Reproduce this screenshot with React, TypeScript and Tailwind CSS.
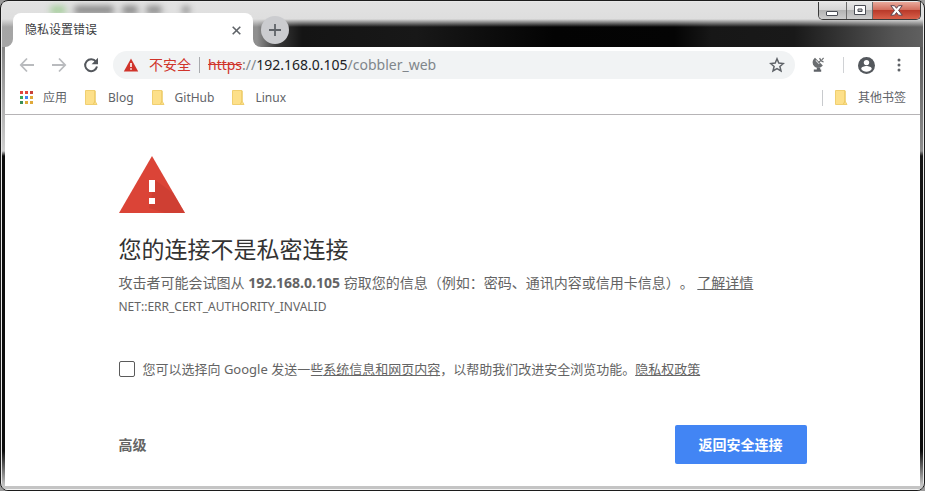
import React, { useState } from 'react';

const BOOKMARKS = ['Blog', 'GitHub', 'Linux'];

const APP_DOTS = [
  'bg-[#e0483e]', 'bg-[#e0483e]', 'bg-[#c9403a]',
  'bg-[#3aa757]', 'bg-[#4285f4]', 'bg-[#e0a93a]',
  'bg-[#3a8f57]', 'bg-[#e0a93a]', 'bg-[#e0a93a]',
];

const FolderIcon: React.FC = () => (
  <svg width="13" height="15" viewBox="0 0 13 15" aria-hidden="true">
    <path d="M0.5 0.5h9.5v10.5l2 3.5H0.5z" fill="#fde08a" stroke="#f0cf70" />
    <path d="M10 1v10l-1.5 3" fill="none" stroke="#eac75e" />
  </svg>
);

const WindowButtons: React.FC = () => (
  <div className="flex h-[18px] shrink-0 self-start overflow-hidden rounded-b-[5px] border border-t-0 border-[#3a3a3a]">
    <button
      aria-label="最小化"
      className="flex w-7 items-center justify-center border-r border-[#6b6b6b] bg-[linear-gradient(#e6e6e6,#d6d6d6_45%,#b4b4b4_50%,#cccccc)]"
    >
      <svg width="13" height="12" viewBox="0 0 13 12">
        <rect x="0.5" y="6.5" width="11" height="4" rx="0.5" fill="#fff" stroke="#4a4d55" />
      </svg>
    </button>
    <button
      aria-label="最大化"
      className="flex w-[26px] items-center justify-center border-r border-[#6b6b6b] bg-[linear-gradient(#e6e6e6,#d6d6d6_45%,#b4b4b4_50%,#cccccc)]"
    >
      <svg width="12" height="11" viewBox="0 0 12 11">
        <path d="M0.5 0.5h11v9h-11z M4 4v2.5h4V4z" fill="#fff" fillRule="evenodd" stroke="#4a4d55" />
      </svg>
    </button>
    <button
      aria-label="关闭"
      className="flex w-[47px] items-center justify-center bg-[linear-gradient(#e9a99b,#d3705f_45%,#b93a2a_50%,#d9604a)]"
    >
      <svg width="13" height="11" viewBox="0 0 13 11">
        <path
          d="M0.8 0.7h3.7l2 2.6 2-2.6h3.7L8.6 5.4l3.7 4.8H8.5L6.5 7.5l-2 2.7H0.8l3.7-4.8z"
          fill="#fff"
          stroke="#5a4550"
        />
      </svg>
    </button>
  </div>
);

const TitleBar: React.FC = () => (
  <div className="relative flex h-[45px] items-end bg-[linear-gradient(#e2e2e2,#dedede_17px,#dedede00_25px),linear-gradient(90deg,#a6a6a6,#8f8f8f_255px,#3a3a3a_275px,#141414_300px,#181818_45%,#030303_60%,#040404_73%,#171717_77%,#191919_86%,#555_97%,#606060)]">
    <div aria-hidden="true" className="absolute top-1 left-12 flex items-center gap-2 blur-[3px]">
      <span className="h-2 w-4 rounded bg-[#a5cf9b]" />
      <span className="h-2 w-10 rounded bg-[#858585]" />
      <span className="h-2 w-4 rounded bg-[#858585]" />
      <span className="h-2 w-4 rounded bg-[#8a8a8a]" />
      <span className="ml-3 h-2 w-2 rounded bg-[#8a8a8a]" />
    </div>

    <svg width="8" height="8" viewBox="0 0 8 8" className="relative ml-[3px]" aria-hidden="true">
      <path d="M8 0v8H0a8 8 0 0 0 8-8z" fill="#fff" />
    </svg>
    <div className="relative flex h-[34px] w-60 items-center justify-between rounded-t-lg bg-white pr-3 pl-3 text-[12px] text-[#3c4043]">
      <span>隐私设置错误</span>
      <button aria-label="关闭标签页">
        <svg width="9" height="9" viewBox="0 0 9 9">
          <path d="M0.7 0.7l7.6 7.6M8.3 0.7L0.7 8.3" stroke="#5f6368" strokeWidth="1.6" />
        </svg>
      </button>
    </div>
    <svg width="8" height="8" viewBox="0 0 8 8" className="relative" aria-hidden="true">
      <path d="M0 0v8h8a8 8 0 0 1-8-8z" fill="#fff" />
    </svg>
    <button
      aria-label="打开新的标签页"
      className="mb-[3px] flex h-7 w-7 items-center justify-center rounded-full bg-[#cbcccf]"
    >
      <svg width="12" height="12" viewBox="0 0 12 12">
        <path d="M6 0v12M0 6h12" stroke="#5f6368" strokeWidth="1.8" />
      </svg>
    </button>
    <div className="flex-1" />
    <WindowButtons />
    <div className="w-0.5" />
  </div>
);

const Toolbar: React.FC = () => (
  <div className="flex h-9 items-center pr-[13px] pl-3.5">
    <div className="flex gap-4">
      <button aria-label="后退">
        <svg width="16" height="16" viewBox="0 0 16 16" fill="none" stroke="#b9bbbe" strokeWidth="1.8">
          <path d="M15 8H2.5M8 1.5L1.8 8 8 14.5" />
        </svg>
      </button>
      <button aria-label="前进">
        <svg width="16" height="16" viewBox="0 0 16 16" fill="none" stroke="#b9bbbe" strokeWidth="1.8">
          <path d="M1 8h12.5M8 1.5L14.2 8 8 14.5" />
        </svg>
      </button>
      <button aria-label="重新加载">
        <svg width="16" height="16" viewBox="0 0 16 16">
          <path d="M13 4.6A6 6 0 1 0 14 9.6" fill="none" stroke="#54585d" strokeWidth="2" />
          <path d="M15 0.8v6.4H8.6z" fill="#54585d" />
        </svg>
      </button>
    </div>

    <div className="ml-3.5 flex h-7 min-w-0 flex-1 items-center rounded-full bg-[#f1f3f4] pr-2.5 pl-2.5 text-[14px]">
      <svg width="16" height="14" viewBox="0 0 16 14" aria-hidden="true">
        <path d="M8 0.5L15.2 13.5H0.8z" fill="#d0342b" />
        <path d="M7.2 5h1.6v4H7.2zM7.2 10.2h1.6v1.6H7.2z" fill="#fff" />
      </svg>
      <span className="ml-2.5 pb-0.5 text-[#d0342b]">不安全</span>
      <span className="mx-2 h-4 w-px bg-[#a9abae]" />
      <span className="flex-1 pb-0.5 text-[#80868b]">
        <s className="text-[#d0342b]">https</s>://<span className="text-[#202124]">192.168.0.105</span>/cobbler_web
      </span>
      <button aria-label="为此网页添加书签">
        <svg width="16" height="16" viewBox="0 0 16 16">
          <path
            d="M8 1.8l1.8 4.3 4.6.4-3.5 3 1.1 4.5L8 11.6 4 14l1.1-4.5-3.5-3 4.6-.4z"
            fill="none"
            stroke="#5f6368"
            strokeWidth="1.5"
          />
        </svg>
      </button>
    </div>

    <button aria-label="扩展程序" className="ml-4">
      <svg width="16" height="16" viewBox="0 0 16 16">
        <path d="M4 0.8C1 3 1 7 3.2 9.2c2.4 2.3 6.2 2.2 8.6-.6z" fill="#6a6d70" />
        <path d="M4.8 3.4l3.4 3.4" stroke="#d5d6d8" strokeWidth="1.2" />
        <path d="M7.5 5.5l3-2.6M8.6 1c.6 2.2 1.8 3.4 4 4M10.8 2.8l1.8-1.8" fill="none" stroke="#6a6d70" strokeWidth="1.1" />
        <path d="M5.8 10.4h3.4v2.2H5.8zM2.8 12.6h7.4v2.2H2.8z" fill="#5f6368" />
      </svg>
    </button>
    <span className="ml-4 h-4 w-px bg-[#d0d2d5]" />
    <button aria-label="用户" className="ml-3.5">
      <svg width="17" height="17" viewBox="0 0 17 17">
        <circle cx="8.5" cy="8.5" r="8.5" fill="#54585d" />
        <circle cx="8.5" cy="5.6" r="2.7" fill="#fff" />
        <path d="M3.2 12c0-2 3.4-2.9 5.3-2.9s5.3.9 5.3 2.9a6.4 6.4 0 0 1-10.6 0z" fill="#fff" />
      </svg>
    </button>
    <button aria-label="自定义及控制" className="ml-4">
      <svg width="16" height="16" viewBox="0 0 16 16" fill="#5f6368">
        <circle cx="8" cy="3" r="1.5" />
        <circle cx="8" cy="8" r="1.5" />
        <circle cx="8" cy="13" r="1.5" />
      </svg>
    </button>
  </div>
);

const BookmarksBar: React.FC = () => (
  <nav className="flex h-8 items-center border-b border-[#b6b4b6] pr-3.5 pb-0.5 pl-[15px] text-[12px] text-[#5f6368]">
    <a href="#apps" className="flex items-center gap-2.5">
      <span className="grid grid-cols-3 gap-[2px]">
        {APP_DOTS.map((color, i) => (
          <span key={i} className={`h-[3px] w-[3px] ${color}`} />
        ))}
      </span>
      应用
    </a>
    <div className="ml-[18px] flex gap-[18px]">
      {BOOKMARKS.map(name => (
        <a key={name} href={`#${name}`} className="flex items-center gap-2.5">
          <FolderIcon />
          {name}
        </a>
      ))}
    </div>
    <div className="flex-1" />
    <span className="mr-3 h-4 w-px bg-[#c8cacd]" />
    <a href="#other" className="flex items-center gap-2.5">
      <FolderIcon />
      其他书签
    </a>
  </nav>
);

const ErrorPage: React.FC = () => {
  const [report, setReport] = useState(false);

  return (
    <main className="mx-auto w-full max-w-[688px] pt-[41px] pb-5 text-[#646464] [text-spacing-trim:space-all]">
      <svg width="66" height="57" viewBox="0 0 66 57" aria-hidden="true">
        <path d="M33 0l33 57H0z" fill="#db4437" />
        <path d="M36 24l18 13 12 20H46L30 52z" fill="#c53d32" opacity="0.55" />
        <path d="M30 24h6v12h-6zM30 42h6v6h-6z" fill="#fff" />
      </svg>
      <h1 className="mt-5 text-[23px] leading-8 text-[#333]">您的连接不是私密连接</h1>
      <p className="mt-1.5 text-[14px] leading-6">
        攻击者可能会试图从 <strong>192.168.0.105</strong> 窃取您的信息（例如：密码、通讯内容或信用卡信息）。{' '}
        <a href="#learn-more" className="underline">了解详情</a>
      </p>
      <p className="mt-0.5 text-[12px] leading-5">NET::ERR_CERT_AUTHORITY_INVALID</p>

      <div className="mt-[42px] flex items-center gap-2 text-[13px] leading-5">
        <input
          id="report"
          type="checkbox"
          checked={report}
          onChange={e => setReport(e.target.checked)}
          className="h-4 w-4 shrink-0 appearance-none rounded-xs border border-[#5a5a5a] bg-white checked:bg-[#4285f4]"
        />
        <label htmlFor="report">
          您可以选择向 Google 发送一些<a href="#info" className="underline">系统信息和网页内容</a>，以帮助我们改进安全浏览功能。<a href="#privacy" className="underline">隐私权政策</a>
        </label>
      </div>

      <div className="mt-[46px] flex items-center justify-between text-[14px] font-bold">
        <button>高级</button>
        <button className="h-[39px] rounded-xs bg-[#4285f4] px-6 text-white">返回安全连接</button>
      </div>
    </main>
  );
};

const App: React.FC = () => {
  return (
    <div className="bg-[#9a9a9a] font-['Noto_Sans','Noto_Sans_CJK_SC',sans-serif]">
      <div className="flex min-h-screen flex-col overflow-hidden rounded-lg border border-[#1c1c1c] bg-[#e8e8e8] p-px pb-0">
        <TitleBar />
        <div className="flex flex-1">
          <div className="w-[3px] bg-[linear-gradient(#868686,#cfcfcf_104px,#0c0c0c_109px,#0c0c0c_92%,#c8c8c8)]" />
          <div className="min-w-0 flex-1 bg-white">
            <Toolbar />
            <BookmarksBar />
            <ErrorPage />
          </div>
          <div className="w-[3px] bg-[linear-gradient(#5a5a5a,#8f8f8f_104px,#161616_109px,#0c0c0c_92%,#c8c8c8)]" />
        </div>
        <div className="h-[3px] bg-[#c4c4c4]" />
        <div className="h-px bg-[#f4f4f4]" />
      </div>
    </div>
  );
};

export default App;
